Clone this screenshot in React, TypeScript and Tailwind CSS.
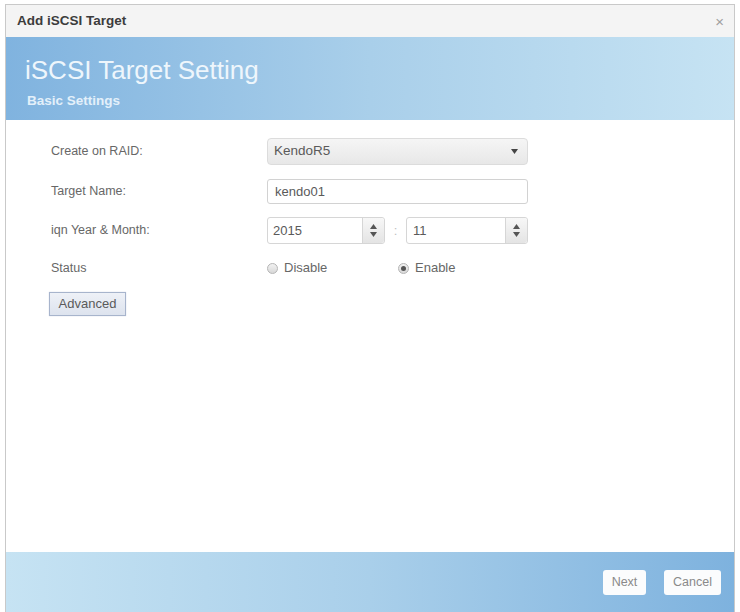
import React from "react";

function Spinner() {
  return (
    <div className="flex w-[22px] flex-col items-center justify-center gap-[3px] rounded-r-[3px] border-l border-[#d6d6d6] bg-gradient-to-b from-[#f7f7f7] to-[#e4e4e4]">
      <svg width="7" height="5" viewBox="0 0 7 5"><path d="M3.5 0L7 5H0z" fill="#555" /></svg>
      <svg width="7" height="5" viewBox="0 0 7 5"><path d="M0 0h7L3.5 5z" fill="#555" /></svg>
    </div>
  );
}

function Radio({ checked }: { checked?: boolean }) {
  return (
    <span className="flex h-[11px] w-[11px] items-center justify-center rounded-full border border-[#b5b5b5] bg-gradient-to-b from-[#f2f2f2] to-[#d8d8d8]">
      {checked && <span className="h-[5px] w-[5px] rounded-full bg-[#555]" />}
    </span>
  );
}

export default function App() {
  return (
    <div className="h-[612px] w-[740px] bg-white pt-[4px] pl-[5px] pr-[5px] font-['Liberation_Sans',Arial,sans-serif]">
      <div className="flex h-[608px] flex-col border-t border-l border-r border-[#c9c9c9]">
        {/* title bar */}
        <div className="flex h-[32px] items-center justify-between bg-[#f4f4f4] pl-[11px] pr-[10px]">
          <span className="text-[13.5px] font-bold text-[#3c3c3c]">Add iSCSI Target</span>
          <span className="text-[15px] leading-none text-[#a0a0a0]">×</span>
        </div>
        {/* header */}
        <div className="flex h-[83px] flex-col bg-gradient-to-r from-[#80b3df] via-[#a9cfea] to-[#c6e3f3] pl-[19px] pt-[18px]">
          <span className="text-[26px] leading-[31px] text-[#eef6fc]">iSCSI Target Setting</span>
          <span className="ml-[2px] mt-[7px] text-[13.5px] font-bold leading-[15px] text-[#e3f0fa]">Basic Settings</span>
        </div>
        {/* body */}
        <div className="flex flex-1 flex-col bg-white pl-[45px] pt-[18px] text-[12.5px] text-[#676767]">
          <div className="grid grid-cols-[216px_261px] items-center">
            <span>Create on RAID:</span>
            <div className="flex h-[27px] items-center justify-between rounded-[4px] border border-[#dcdcdc] bg-gradient-to-b from-[#f5f5f5] to-[#e8e8e8] pl-[6px] pr-[9px] text-[13.5px] text-[#5a5a5a]">
              <span>KendoR5</span>
              <svg width="7" height="5" viewBox="0 0 7 5"><path d="M0 0h7L3.5 5z" fill="#444" /></svg>
            </div>
          </div>
          <div className="mt-[14px] grid grid-cols-[216px_261px] items-center">
            <span>Target Name:</span>
            <div className="flex h-[25px] items-center rounded-[3px] border border-[#d2d2d2] bg-white pl-[7px] text-[13px] text-[#5a5a5a]">kendo01</div>
          </div>
          <div className="mt-[13px] grid grid-cols-[216px_261px] items-center">
            <span>iqn Year &amp; Month:</span>
            <div className="flex items-center text-[13px]">
              <div className="flex h-[27px] w-[118px] rounded-[3px] border border-[#d6d6d6] bg-white">
                <span className="flex flex-1 items-center pl-[5px] text-[#5a5a5a]">2015</span>
                <Spinner />
              </div>
              <span className="w-[21px] text-center text-[#c0c0c0]">:</span>
              <div className="flex h-[27px] w-[122px] rounded-[3px] border border-[#d6d6d6] bg-white">
                <span className="flex flex-1 items-center pl-[6px] text-[#5a5a5a]">11</span>
                <Spinner />
              </div>
            </div>
          </div>
          <div className="mt-[14px] grid h-[20px] grid-cols-[216px_261px] items-center">
            <span>Status</span>
            <div className="flex items-center text-[13px]">
              <div className="flex w-[131px] items-center gap-[6px]">
                <Radio />
                <span>Disable</span>
              </div>
              <div className="flex items-center gap-[6px]">
                <Radio checked />
                <span>Enable</span>
              </div>
            </div>
          </div>
          <div className="mt-[14px] flex">
            <div className="-ml-[2px] flex h-[24px] w-[77px] items-center justify-center border border-[#a7b4cc] bg-gradient-to-b from-[#eef1f7] to-[#dde3ee] text-[13px] text-[#5a5a5a] shadow-[0_0_1px_#c7d0e0]">
              Advanced
            </div>
          </div>
        </div>
        {/* footer */}
        <div className="flex h-[60px] items-center justify-end gap-[18px] bg-gradient-to-r from-[#c6e3f3] via-[#a9cfea] to-[#7eb2de] pr-[13px] text-[12.5px] text-[#8a8a8a]">
          <div className="flex h-[25px] w-[43px] items-center justify-center rounded-[3px] bg-[#fbfcfd]">Next</div>
          <div className="flex h-[25px] w-[57px] items-center justify-center rounded-[3px] bg-[#fbfcfd]">Cancel</div>
        </div>
      </div>
    </div>
  );
}
